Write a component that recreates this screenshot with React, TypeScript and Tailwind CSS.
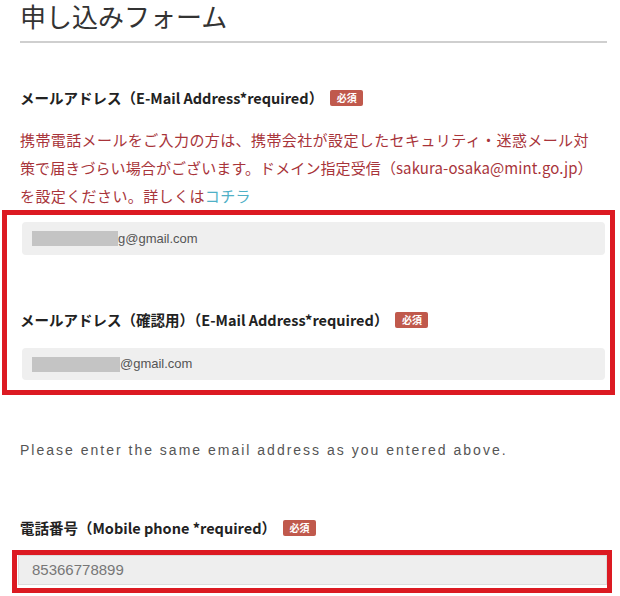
import React from "react";

const jp = { fontFamily: '"Noto Sans CJK JP", "Noto Sans", sans-serif' };
const latin = { fontFamily: '"Liberation Sans", Arial, sans-serif' };

function Badge() {
  return (
    <span
      className="ml-[7px] inline-flex h-[16px] w-[33px] shrink-0 items-center justify-center rounded-[2px] bg-[#c0594c] text-[10px] font-bold leading-none text-white"
      style={jp}
    >
      必須
    </span>
  );
}

function Label({ children }: { children: React.ReactNode }) {
  return (
    <div className="flex h-[20px] items-center text-[14.5px] font-bold text-[#222]" style={jp}>
      <span className="whitespace-nowrap">{children}</span>
      <Badge />
    </div>
  );
}

function EmailInput({ redactWidth, prefix }: { redactWidth: number; prefix?: string }) {
  return (
    <div className="mx-[2px] flex h-full items-center rounded-[4px] bg-[#efefef] pl-[10px]">
      <span className="h-[15px] bg-[#c4c4c4]" style={{ width: redactWidth }} />
      <span className="text-[13px] text-[#555]" style={latin}>
        {prefix}@gmail.com
      </span>
    </div>
  );
}

export default function App() {
  return (
    <div className="relative h-[596px] w-[620px] overflow-hidden bg-white">
      <div className="pl-[20px] pr-[13px]">
        <h1 className="pt-[1px] text-[26px] font-normal leading-[30px] text-[#333]" style={jp}>
          申し込みフォーム
        </h1>
        <div className="mt-[10px] h-[2px] bg-[#cfcfcf]" />

        <div className="mt-[45px]">
          <Label>メールアドレス（E-Mail Address*required）</Label>
        </div>

        <div
          className="mt-[18px] text-[15px] leading-[28px] tracking-[0.4px] text-[#a8343a]"
          style={jp}
        >
          <div className="whitespace-nowrap">
            携帯電話メールをご入力の方は、携帯会社が設定したセキュリティ・迷惑メール対
          </div>
          <div className="whitespace-nowrap tracking-[0.1px]">
            策で届きづらい場合がございます。ドメイン指定受信（sakura-osaka@mint.go.jp）
          </div>
          <div className="whitespace-nowrap">
            を設定ください。詳しくは<span className="text-[#4fb0c6]">コチラ</span>
          </div>
        </div>

        <div className="mt-[12px] h-[33px]">
          <EmailInput redactWidth={86} prefix="g" />
        </div>

        <div className="mt-[55px]">
          <Label>メールアドレス（確認用）（E-Mail Address*required）</Label>
        </div>

        <div className="mt-[18px] h-[32px]">
          <EmailInput redactWidth={88} />
        </div>

        <div
          className="mt-[60px] h-[20px] whitespace-nowrap text-[14px] leading-[20px] tracking-[2px] text-[#555]"
          style={latin}
        >
          Please enter the same email address as you entered above.
        </div>

        <div className="mt-[58px]">
          <Label>電話番号（Mobile phone *required）</Label>
        </div>

        <div className="-ml-[2px] mt-[17px] flex h-[30px] items-center border border-[#dcdcdc] bg-[#eeeeee] pl-[13px]">
          <span className="text-[15px] text-[#777]" style={latin}>
            85366778899
          </span>
        </div>
      </div>

      {/* annotation overlays */}
      <div className="pointer-events-none absolute left-[2px] top-[210px] h-[185px] w-[613px] border-[5px] border-[#dc1a22]" />
      <div className="pointer-events-none absolute left-[12px] top-[550px] h-[43px] w-[600px] border-[5px] border-[#dc1a22]" />
    </div>
  );
}
